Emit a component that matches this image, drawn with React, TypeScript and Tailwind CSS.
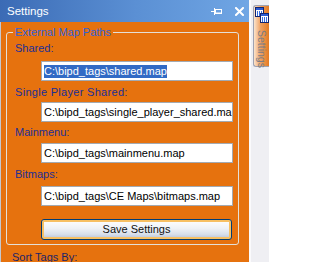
const labelCls = 'text-[#1b2f95] h-[13px] whitespace-nowrap'

function PathBox({ value, selected }: { value: string; selected?: boolean }) {
  return (
    <div className="ml-[26px] flex h-[20px] w-[192px] items-center overflow-hidden border border-[#a3aab2] bg-white pl-[2px] whitespace-nowrap text-black">
      {selected ? <span className="bg-[#316ac5] text-white">{value}</span> : <span>{value}</span>}
    </div>
  )
}

function TabIcon() {
  return (
    <svg width="14" height="16" viewBox="0 0 14 16">
      <rect x="0.5" y="0.5" width="8" height="9" fill="#ffffff" stroke="#13246e" />
      <rect x="1" y="1" width="7" height="2" fill="#2a5ad2" />
      <rect x="2" y="4" width="1" height="5" fill="#3a6ee0" />
      <rect x="4" y="4" width="1" height="5" fill="#3a6ee0" />
      <rect x="6" y="4" width="1" height="5" fill="#3a6ee0" />
      <rect x="5.5" y="6.5" width="8" height="9" fill="#ffffff" stroke="#13246e" />
      <rect x="6" y="7" width="7" height="2" fill="#2a5ad2" />
      <rect x="7" y="10" width="1" height="5" fill="#3a6ee0" />
      <rect x="9" y="10" width="1" height="5" fill="#3a6ee0" />
      <rect x="11" y="10" width="1" height="5" fill="#3a6ee0" />
    </svg>
  )
}

export default function App() {
  return (
    <div className="flex h-[262px] w-[269px] overflow-hidden bg-[#efeff3] font-['Liberation_Sans',Arial,sans-serif] text-[11px] leading-[13px]">
      <div className="flex w-[249px] shrink-0 flex-col">
        {/* title bar */}
        <div className="flex h-[22px] shrink-0 items-center bg-[linear-gradient(to_right,#3b6bb5,#5b90d4_55%,#70a6e4)] pl-[7px] text-white">
          <span className="flex-1 text-[11.5px]">Settings</span>
          <svg width="11" height="7" viewBox="0 0 11 7" className="mr-[13px]">
            <rect x="0" y="3" width="4" height="1" fill="#fff" />
            <rect x="3" y="0" width="1" height="7" fill="#fff" />
            <rect x="4.5" y="1.5" width="6" height="4" fill="none" stroke="#fff" />
            <rect x="4" y="4.5" width="7" height="1.5" fill="#fff" />
          </svg>
          <svg width="9" height="9" viewBox="0 0 9 9" className="mr-[5px]">
            <path d="M1 1L8 8M8 1L1 8" stroke="#fff" strokeWidth="2" strokeLinecap="square" />
          </svg>
        </div>

        {/* body */}
        <div className="flex-1 border-l border-[#c4c8d0] bg-[#e6720e] pt-[10px]">
          <div className="relative ml-[5px] w-[233px] rounded-[3px] border border-[#e4e0d8] pt-[9px] pb-[4px] pl-[8px]">
            <span className="absolute -top-[7px] left-[6px] bg-[#e6720e] px-[2px] text-[#3461d6]">
              External Map Paths
            </span>
            <div className={labelCls}>Shared:</div>
            <div className="mt-[6px]">
              <PathBox value="C:\bipd_tags\shared.map" selected />
            </div>
            <div className={`${labelCls} mt-[5px] tracking-[0.3px]`}>Single Player Shared:</div>
            <div className="mt-[3px]">
              <PathBox value="C:\bipd_tags\single_player_shared.ma" />
            </div>
            <div className={`${labelCls} mt-[4px]`}>Mainmenu:</div>
            <div className="mt-[4px]">
              <PathBox value="C:\bipd_tags\mainmenu.map" />
            </div>
            <div className={`${labelCls} mt-[5px]`}>Bitmaps:</div>
            <div className="mt-[5px]">
              <PathBox value="C:\bipd_tags\CE Maps\bitmaps.map" />
            </div>
            <button className="mt-[13px] ml-[26px] flex h-[21px] w-[191px] items-center justify-center rounded-[3px] border border-[#003c74] bg-[linear-gradient(to_bottom,#ffffff,#eef1f6_45%,#d8dfea_75%,#b4c0d8)] text-[#111] shadow-[inset_0_0_0_2px_#f7c064]">
              Save Settings
            </button>
          </div>
          <div className="mt-[6px] pl-[11px] text-[#1c2468]">Sort Tags By:</div>
        </div>
      </div>

      {/* auto-hide tab strip */}
      <div className="flex-1 border-l-2 border-[#fafafc]">
        <div className="mt-[5px] ml-[2px] flex h-[62px] flex-col items-center rounded-l-[3px] border border-r-0 border-[#9ea2b2] bg-[linear-gradient(to_right,#fbe3cc,#efa060_45%,#e47a22)]">
          <div className="mt-[1px]">
            <TabIcon />
          </div>
          <span className="mt-[7px] text-[10.5px] text-[#7c7c84] [writing-mode:vertical-rl]">Settings</span>
        </div>
      </div>
    </div>
  )
}
